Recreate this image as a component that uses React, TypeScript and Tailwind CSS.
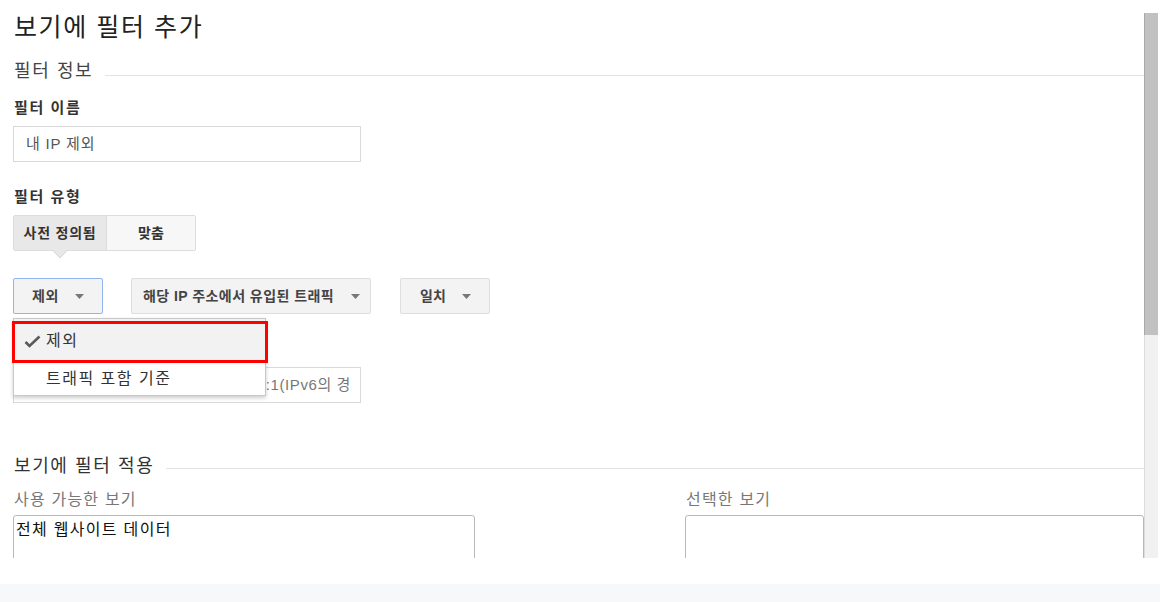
import React from "react";

const FONT = { fontFamily: '"Liberation Sans", "Noto Sans CJK KR", sans-serif' };

function Caret() {
  return (
    <svg width="9" height="5" viewBox="0 0 9 5" className="shrink-0">
      <path d="M0 0 L9 0 L4.5 5 Z" fill="#777" />
    </svg>
  );
}

export default function App() {
  return (
    <div className="w-[1160px] h-[602px] flex flex-col bg-white text-[#222]" style={FONT}>
      <div className="h-[558px] flex">
        <div className="flex-1 overflow-hidden pl-[13px]">
          <div className="h-[52px] flex items-center pl-[1px] pt-[3px] text-[25px] tracking-[1.6px] text-[#222]">보기에 필터 추가</div>
          <div className="h-[38px] flex items-center gap-[12px]">
            <span className="pl-[1px] text-[18px] tracking-[1.6px] text-[#444]">필터 정보</span>
            <div className="flex-1 h-px bg-[#e3e3e3] mt-[8px]" />
          </div>
          <div className="h-[36px] flex items-center pl-[1px] text-[15px] tracking-[1.6px] font-bold text-[#333]">필터 이름</div>
          <div className="h-[36px] w-[348px] border border-[#d9d9d9] flex items-center pl-[12px] text-[15px] tracking-[0.8px] text-[#555]">
            내 IP 제외
          </div>
          <div className="mt-[18px] h-[35px] flex items-center pl-[1px] text-[15px] tracking-[1.6px] font-bold text-[#333]">필터 유형</div>
          <div className="relative">
            <div className="h-[36px] w-[183px] flex border border-[#dcdcdc] rounded-[2px] text-[14px] font-bold text-[#333]">
              <div className="w-[93px] bg-[#e8e8e8] flex items-center justify-center border-r border-[#dcdcdc] tracking-[0.8px]">사전 정의됨</div>
              <div className="flex-1 bg-[#f7f7f7] flex items-center justify-center">맞춤</div>
            </div>
            <svg className="absolute left-[39px] top-[35px]" width="16" height="9" viewBox="0 0 16 9">
              <path d="M0.5 0 L8 8 L15.5 0" fill="#e8e8e8" stroke="#d4d4d4" />
              <path d="M1.5 0 L14.5 0" stroke="#e8e8e8" />
            </svg>
          </div>
          <div className="relative mt-[27px] h-[36px] flex text-[14px] font-bold text-[#444]">
            <div className="w-[90px] h-[36px] flex items-center justify-between pl-[18px] pr-[18px] bg-[#f3f3f3] border border-[#8fb5ee] rounded-[2px]">
              <span className="tracking-[0.5px]">제외</span>
              <Caret />
            </div>
            <div className="ml-[28px] w-[240px] h-[36px] flex items-center justify-between pl-[11px] pr-[10px] bg-[#f3f3f3] border border-[#dedede] rounded-[2px]">
              <span className="tracking-[0.45px]">해당 IP 주소에서 유입된 트래픽</span>
              <Caret />
            </div>
            <div className="ml-[29px] w-[90px] h-[36px] flex items-center justify-between pl-[19px] pr-[18px] bg-[#f3f3f3] border border-[#dedede] rounded-[2px]">
              <span>일치</span>
              <Caret />
            </div>
            <div className="absolute z-10 left-0 top-[40px] w-[253px] h-[78px] bg-white border border-[#c8c8c8] shadow-[0_2px_4px_rgba(0,0,0,0.2)] font-normal text-[16px] text-[#333]">
              <div className="h-[44px] bg-[#f2f2f2] flex items-center pl-[10px]">
                <svg width="17" height="13" viewBox="0 0 17 13" className="mr-[5px]">
                  <path d="M1.5 7 L5.5 11 L15.5 1.5" fill="none" stroke="#5a5a5a" strokeWidth="2.6" />
                </svg>
                <span className="tracking-[1.5px]">제외</span>
              </div>
              <div className="h-[32px] flex items-center pl-[32px] tracking-[1.5px]">트래픽 포함 기준</div>
            </div>
            <div className="absolute z-20 left-[-1px] top-[43px] w-[256px] h-[42px] border-[3px] border-[#ff0000]" />
          </div>
          <div className="mt-[53px] h-[36px] w-[348px] border border-[#d9d9d9] flex items-center pl-[12px] pr-[9px] text-[15px] text-[#777]">
            <div className="flex-1 overflow-hidden flex justify-end">
              <span className="shrink-0 whitespace-nowrap tracking-[0.6px]">:1(IPv6의 경</span>
            </div>
          </div>
          <div className="mt-[44px] h-[38px] flex items-center gap-[12px]">
            <span className="pl-[1px] text-[18px] tracking-[1.6px] text-[#333]">보기에 필터 적용</span>
            <div className="flex-1 h-px bg-[#e3e3e3] mt-[4px]" />
          </div>
          <div className="grid grid-cols-[462px_1fr] gap-x-[210px]">
            <div className="h-[30px] flex items-center pl-[1px] pb-[1px] text-[16px] tracking-[1.2px] text-[#777]">사용 가능한 보기</div>
            <div className="h-[30px] flex items-center pl-[1px] pb-[1px] text-[16px] tracking-[1.2px] text-[#777]">선택한 보기</div>
            <div className="h-[60px] border border-[#b8b8b8] rounded-t-[3px] pl-[2px] pt-[2px] text-[16px] tracking-[1.3px] text-[#111]">전체 웹사이트 데이터</div>
            <div className="h-[60px] border border-[#b8b8b8] rounded-t-[3px]" />
          </div>
        </div>
        <div className="w-[16px] flex flex-col pt-[13px] pr-[2px]">
          <div className="h-[322px] bg-[#c1c1c1] border-l border-[#a9a9a9]" />
          <div className="flex-1 bg-[#f1f1f1] border-l border-[#dcdcdc]" />
        </div>
      </div>
      <div className="h-[26px] bg-white" />
      <div className="h-[18px] bg-[#f7f8fa]" />
    </div>
  );
}
